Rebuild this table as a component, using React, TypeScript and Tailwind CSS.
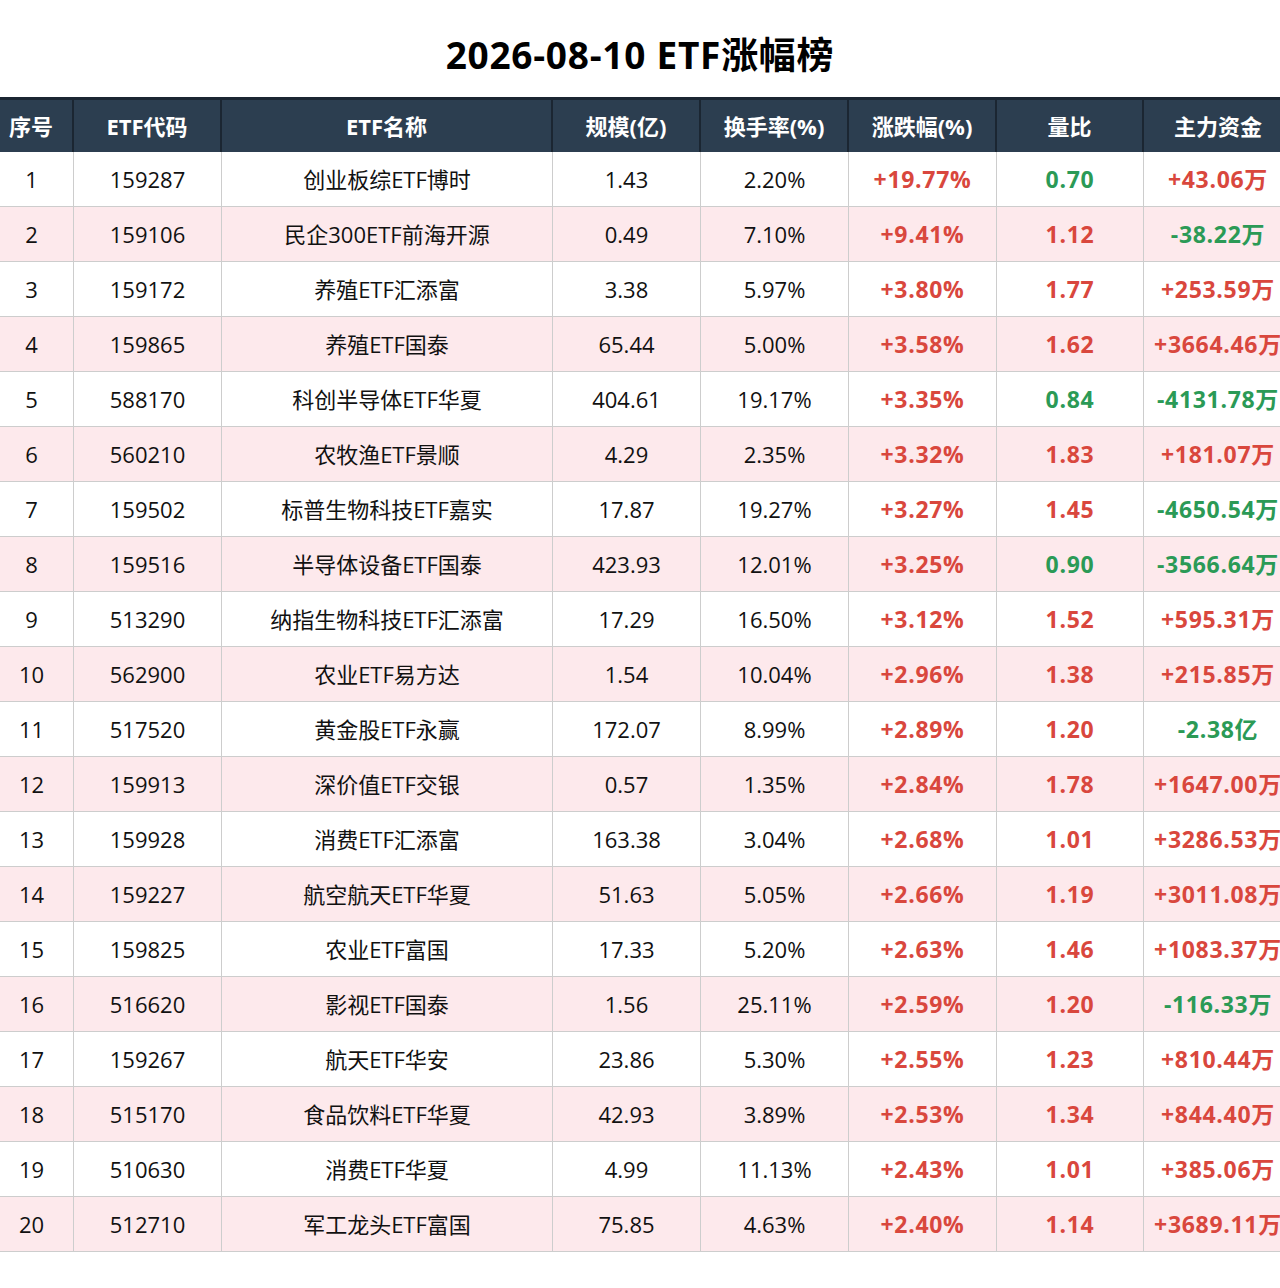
import React from 'react';

type Row = [number, string, string, string, string, string, string, string];

const rows: Row[] = [
  [1, '159287', '创业板综ETF博时', '1.43', '2.20%', '+19.77%', '0.70', '+43.06万'],
  [2, '159106', '民企300ETF前海开源', '0.49', '7.10%', '+9.41%', '1.12', '-38.22万'],
  [3, '159172', '养殖ETF汇添富', '3.38', '5.97%', '+3.80%', '1.77', '+253.59万'],
  [4, '159865', '养殖ETF国泰', '65.44', '5.00%', '+3.58%', '1.62', '+3664.46万'],
  [5, '588170', '科创半导体ETF华夏', '404.61', '19.17%', '+3.35%', '0.84', '-4131.78万'],
  [6, '560210', '农牧渔ETF景顺', '4.29', '2.35%', '+3.32%', '1.83', '+181.07万'],
  [7, '159502', '标普生物科技ETF嘉实', '17.87', '19.27%', '+3.27%', '1.45', '-4650.54万'],
  [8, '159516', '半导体设备ETF国泰', '423.93', '12.01%', '+3.25%', '0.90', '-3566.64万'],
  [9, '513290', '纳指生物科技ETF汇添富', '17.29', '16.50%', '+3.12%', '1.52', '+595.31万'],
  [10, '562900', '农业ETF易方达', '1.54', '10.04%', '+2.96%', '1.38', '+215.85万'],
  [11, '517520', '黄金股ETF永赢', '172.07', '8.99%', '+2.89%', '1.20', '-2.38亿'],
  [12, '159913', '深价值ETF交银', '0.57', '1.35%', '+2.84%', '1.78', '+1647.00万'],
  [13, '159928', '消费ETF汇添富', '163.38', '3.04%', '+2.68%', '1.01', '+3286.53万'],
  [14, '159227', '航空航天ETF华夏', '51.63', '5.05%', '+2.66%', '1.19', '+3011.08万'],
  [15, '159825', '农业ETF富国', '17.33', '5.20%', '+2.63%', '1.46', '+1083.37万'],
  [16, '516620', '影视ETF国泰', '1.56', '25.11%', '+2.59%', '1.20', '-116.33万'],
  [17, '159267', '航天ETF华安', '23.86', '5.30%', '+2.55%', '1.23', '+810.44万'],
  [18, '515170', '食品饮料ETF华夏', '42.93', '3.89%', '+2.53%', '1.34', '+844.40万'],
  [19, '510630', '消费ETF华夏', '4.99', '11.13%', '+2.43%', '1.01', '+385.06万'],
  [20, '512710', '军工龙头ETF富国', '75.85', '4.63%', '+2.40%', '1.14', '+3689.11万'],
];

const headers = ['序号', 'ETF代码', 'ETF名称', '规模(亿)', '换手率(%)', '涨跌幅(%)', '量比', '主力资金'];

const cols = 'grid grid-cols-[84px_148px_331px_148px_148px_148px_147px_148px]';
const red = 'text-[#d9473d] font-bold text-[23px] tracking-[0.03em]';
const green = 'text-[#2b9a56] font-bold text-[23px] tracking-[0.03em]';

export default function App() {
  return (
    <div
      className="w-[1280px] h-[1288px] bg-white overflow-hidden"
      style={{ fontFamily: '"Open Sans", "Noto Sans CJK SC", sans-serif' }}
    >
      {/* Title */}
      <div className="h-[97px] flex items-center justify-center pt-3">
        <h1 className="text-[37px] font-bold text-black tracking-[0.02em]">2026-08-10 ETF涨幅榜</h1>
      </div>

      <div className="-ml-[10px] w-[1302px]">
        {/* Header */}
        <div className={`${cols} h-[55px] bg-[#2c3e50] border-t-[3px] border-[#1b2632]`}>
          {headers.map((h, i) => (
            <div
              key={h}
              className={`flex items-center justify-center text-white font-bold text-[22px] ${
                i < headers.length - 1 ? 'border-r-2 border-[#1b2632]' : ''
              }`}
            >
              {h}
            </div>
          ))}
        </div>

        {/* Body */}
        {rows.map((r, idx) => {
          const bg = idx % 2 === 1 ? 'bg-[#fde9ec]' : 'bg-white';
          const ratio = parseFloat(r[6]) < 1 ? green : red;
          const flow = r[7].startsWith('-') ? green : red;
          const cell = 'flex items-center justify-center border-r border-[#cdcdcd] whitespace-nowrap';
          return (
            <div key={r[0]} className={`${cols} h-[55px] ${bg} border-b border-[#cdcdcd] text-[22px] text-[#111]`}>
              <div className={cell}>{r[0]}</div>
              <div className={cell}>{r[1]}</div>
              <div className={cell}>{r[2]}</div>
              <div className={cell}>{r[3]}</div>
              <div className={cell}>{r[4]}</div>
              <div className={`${cell} ${red}`}>{r[5]}</div>
              <div className={`${cell} ${ratio}`}>{r[6]}</div>
              <div className={`flex items-center justify-center whitespace-nowrap ${flow}`}>{r[7]}</div>
            </div>
          );
        })}
      </div>
    </div>
  );
}
